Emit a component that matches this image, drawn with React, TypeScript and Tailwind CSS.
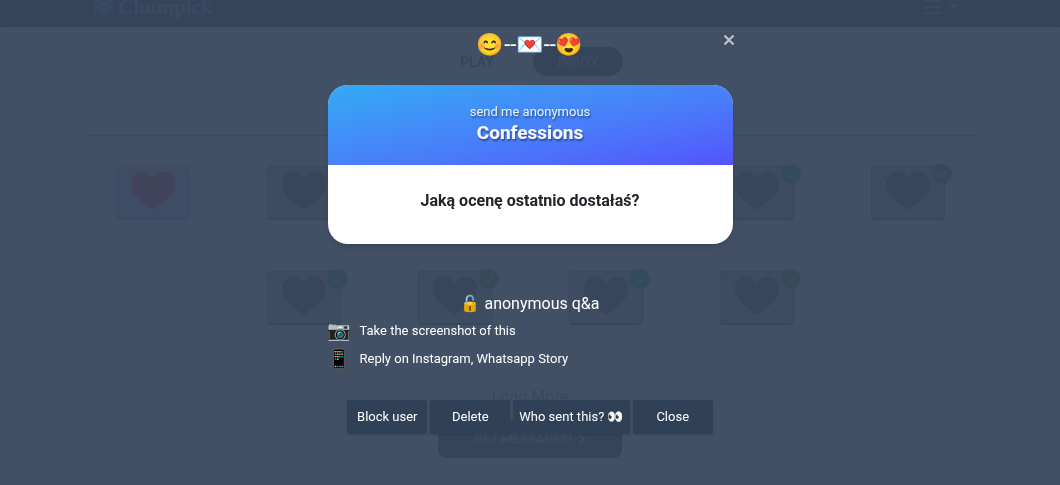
import React from "react";

type Message = { id: number; read: boolean };

const rows: Message[][] = [
  [
    { id: 1, read: false },
    { id: 2, read: true },
    { id: 3, read: true },
    { id: 4, read: true },
    { id: 5, read: true },
    { id: 6, read: true },
  ],
  [
    { id: 7, read: true },
    { id: 8, read: true },
    { id: 9, read: true },
    { id: 10, read: true },
  ],
];

function AtomLogo() {
  return (
    <svg viewBox="0 0 24 24" className="size-6 text-[#10959a]" fill="none" stroke="currentColor" strokeWidth="2" aria-hidden="true">
      <ellipse cx="12" cy="12" rx="4" ry="10" />
      <ellipse cx="12" cy="12" rx="4" ry="10" transform="rotate(60 12 12)" />
      <ellipse cx="12" cy="12" rx="4" ry="10" transform="rotate(120 12 12)" />
      <circle cx="12" cy="12" r="2" fill="currentColor" />
    </svg>
  );
}

type EnvelopeProps = { read: boolean; link: "up" | "down" | "none" };

function Envelope({ read, link }: EnvelopeProps) {
  const line = read ? "#000000" : "#3b6b4b";
  return (
    <svg viewBox="0 0 151 90" className="h-[90px] w-[151px] overflow-visible" aria-hidden="true">
      {link === "up" && <path d="M114 20Q152 -2 190 21" fill="none" stroke="#000" strokeOpacity="0.3" strokeDasharray="6 3" />}
      {link === "down" && <path d="M114 76Q152 90 190 76" fill="none" stroke="#000" strokeOpacity="0.3" strokeDasharray="6 3" />}
      <rect x="32" y="20" width="88" height="68" rx="12" fill="#000" fillOpacity="0.03" />
      <rect x="39" y="21" width="74" height="53" rx="4" fill={read ? "#a8a8a8" : "#b4bfe8"} stroke={line} strokeOpacity="0.5" />
      <path d="M41 24L60 38M111 24L92 38" fill="none" stroke={line} strokeOpacity="0.3" strokeWidth="2" />
      <path d="M41 73L62 60M111 73L90 60" fill="none" stroke={line} strokeOpacity="0.1" strokeWidth="2" />
      <path d="M40 74H112" stroke={line} strokeOpacity="0.5" strokeWidth="2" />
      <path
        d="M76 65C66 57 54 51 54 39C54 25 71 22 76 34C81 22 98 25 98 39C98 51 86 57 76 65Z"
        fill={read ? "#383838" : "#d00020"}
      />
      {read && (
        <g>
          <circle cx="110" cy="29" r="10" fill="#108020" />
          <path d="M105 29L109 33L115 25" fill="none" stroke="#7ac58a" strokeWidth="2" />
        </g>
      )}
    </svg>
  );
}

function InboxPage() {
  return (
    <div className="flex flex-col items-center" aria-hidden="true">
      <header className="flex h-[27px] w-full items-end justify-between bg-[#101c2c] pr-[101px] pb-1.5 pl-[92px] shadow-md">
        <div className="flex items-center gap-0.5">
          <AtomLogo />
          <span className="font-['Liberation_Serif',serif] text-[21px] leading-7 font-bold text-[#7d8999]">Chumpick</span>
        </div>
        <div className="flex h-7 items-center gap-2">
          <svg viewBox="0 0 17 16" className="h-4 w-[17px]" stroke="#8490a0" strokeWidth="2">
            <path d="M0 2H17M0 8H17M0 14H17" />
          </svg>
          <svg viewBox="0 0 10 6" className="h-[6px] w-[10px]" fill="#9aa6b5">
            <path d="M0 0H10L5 5Z" />
          </svg>
        </div>
      </header>
      <nav className="mt-5 flex items-center">
        <span className="flex h-[29px] w-20 items-center justify-center rounded-full bg-[#f8f8f8] text-sm leading-5 font-medium text-black">PLAY</span>
        <span className="h-px w-4 bg-[#d8d8d8]" />
        <span className="flex h-[29px] w-[90px] items-center justify-center rounded-full bg-[#101c2c] text-sm leading-5 font-medium text-[#8d99a9]">INBOX</span>
      </nav>
      <hr className="mt-[59px] w-full max-w-[892px] border-[#777777]" />
      <div className="mt-[9px] flex flex-col gap-[15px]">
        {rows.map((row, index) => (
          <div key={index} className="flex justify-center">
            {row.map((message, i) => (
              <Envelope
                key={message.id}
                read={message.read}
                link={i === row.length - 1 ? "none" : i % 2 === 0 ? "up" : "down"}
              />
            ))}
          </div>
        ))}
      </div>
      <p className="mt-[45px] text-base leading-6 text-[#555555]">Load More</p>
      <div className="mt-[11px] flex h-[38px] w-[184px] items-center justify-center gap-1.5 rounded-lg bg-[#101c2c] text-[13px] leading-4 font-bold text-[#8d99a9]">
        GET MESSAGES!
        <svg viewBox="0 0 8 12" className="h-3 w-2" fill="none" stroke="currentColor" strokeWidth="2">
          <path d="M1 1L6 6L1 11" />
        </svg>
      </div>
    </div>
  );
}

const actionClass =
  "flex h-[34px] min-w-20 items-center justify-center rounded-xs bg-[#304057] px-1.5 text-[13px] leading-5 text-white shadow-sm";

function MessageDialog() {
  return (
    <div
      role="dialog"
      aria-modal="true"
      aria-labelledby="question"
      className="fixed inset-0 flex flex-col items-center overflow-auto bg-[#38475e]/95 px-4 pt-[30px] text-white"
    >
      <div className="relative flex w-full max-w-[405px] flex-col">
        <button type="button" aria-label="Dismiss" className="absolute -top-1 -right-2.5 flex size-7 items-center justify-center">
          <svg viewBox="0 0 10 10" className="size-[10px]" stroke="#c4c9d0" strokeWidth="2">
            <path d="M0.500 0.500L9.500 9.500M9.500 0.500L0.500 9.500" />
          </svg>
        </button>
        <p className="text-center text-[22px] leading-[30px]">😊--💌--😍</p>
        <section className="mt-[25px] overflow-hidden rounded-[20px] bg-white text-center shadow-md">
          <div className="h-20 bg-linear-to-br from-[#31aaf4] to-[#5353fc] pt-[17px] text-shadow-[1px_2px_2px_rgb(0_0_0/0.4)]">
            <p className="text-[13px] leading-5 text-[#e9f2ff]">send me anonymous</p>
            <h1 className="text-[19px] leading-[22px] font-extrabold text-[#f2f6ff]">Confessions</h1>
          </div>
          <h2 id="question" className="px-4 pt-6 pb-[31px] text-base leading-6 font-bold text-[#212529]">
            Jaką ocenę ostatnio dostałaś?
          </h2>
        </section>
        <p className="mt-12 text-center text-base leading-6">🔓 anonymous q&amp;a</p>
        <ul className="mt-px text-[13px] leading-5">
          <li className="flex h-7 items-center gap-2">
            <span className="w-6 text-center text-[19px]">📷</span>Take the screenshot of this
          </li>
          <li className="flex h-7 items-center gap-2">
            <span className="w-6 text-center text-[19px]">📱</span>Reply on Instagram, Whatsapp Story
          </li>
        </ul>
        <div className="mt-[27px] flex flex-wrap justify-center gap-[3px]">
          <button type="button" className={actionClass}>Block user</button>
          <button type="button" className={actionClass}>Delete</button>
          <button type="button" className={actionClass}>Who sent this? 👀</button>
          <button type="button" className={actionClass}>Close</button>
        </div>
      </div>
    </div>
  );
}

export default function App() {
  return (
    <main className="h-screen overflow-hidden bg-white font-['Roboto','Noto_Color_Emoji',sans-serif]">
      <InboxPage />
      <MessageDialog />
    </main>
  );
}
